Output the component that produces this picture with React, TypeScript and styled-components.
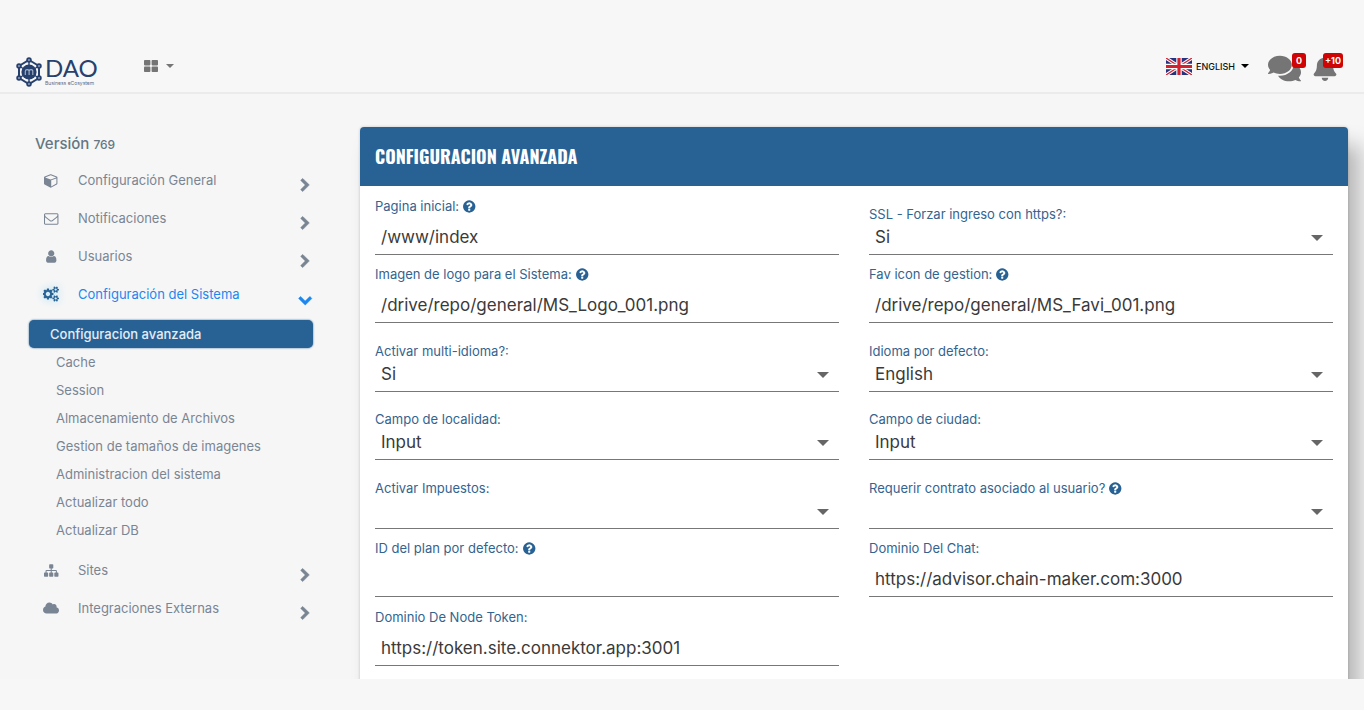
import React from "react";
import styled, { createGlobalStyle, css } from "styled-components";
import { FaBell, FaCloud, FaComments } from "react-icons/fa";

const blue = "#286295";
const textFont = `Inter, "Open Sans", "Liberation Sans", sans-serif`;

const GlobalStyle = createGlobalStyle`
  * { box-sizing: border-box; }
  body { margin: 0; background: #f6f6f6; font-family: ${textFont}; color: #7a8594; }
  button, input, select { font-family: inherit; margin: 0; }
  ul { list-style: none; margin: 0; padding: 0; }
`;

const Page = styled.div`
  display: flex;
  flex-direction: column;
  height: 100vh;
`;

const TopBar = styled.header`
  display: flex;
  align-items: flex-start;
  flex: none;
  height: 94px;
  padding: 52px 21px 0 15px;
  background: #f7f7f7;
  border-bottom: 2px solid #ebebeb;
`;

const Brand = styled.a`
  display: flex;
  align-items: center;
  gap: 2px;
  height: 40px;
  color: #27416f;
  text-decoration: none;
`;

const BrandText = styled.span`
  display: flex;
  flex-direction: column;
  width: 52px;
`;

const BrandName = styled.span`
  font: 400 24px/22px Lato, sans-serif;
`;

const BrandTag = styled.span`
  font: 400 5px/8px Inter, sans-serif;
  white-space: nowrap;
  color: #5d6b87;
`;

const IconButton = styled.button`
  display: flex;
  align-items: center;
  gap: 8px;
  padding: 0;
  border: 0;
  background: none;
  color: #757575;
`;

const AppsButton = styled(IconButton)`
  height: 28px;
  margin-left: 47px;
`;

const Caret = styled.span<{ $color: string; $size: number }>`
  width: 0;
  height: 0;
  border: ${(p) => p.$size}px solid transparent;
  border-top-color: ${(p) => p.$color};
  border-bottom: 0;
`;

const Tools = styled.div`
  display: flex;
  align-items: center;
  height: 32px;
  margin-left: auto;
`;

const LanguageButton = styled(IconButton)`
  gap: 4px;
  margin-right: 19px;
  margin-bottom: 4px;
  font-size: 9px;
  font-weight: 500;
  color: #111;

  & > ${Caret} { margin-left: 2px; }
`;

const AlertButton = styled(IconButton)`
  position: relative;
  height: 28px;
  margin-right: 11px;

  &:last-child { margin-right: 5px; }
`;

const Badge = styled.span`
  position: absolute;
  top: -1px;
  right: -5px;
  min-width: 14px;
  padding: 0 2px;
  border-radius: 3px;
  background: #cf0404;
  color: #fff;
  font-size: 9px;
  font-weight: 700;
  line-height: 15px;
  text-align: center;
`;

const Content = styled.div`
  display: flex;
  align-items: flex-start;
  flex: 1;
  min-height: 0;
  overflow-y: auto;
  overflow-x: hidden;
  scrollbar-width: none;
`;

const Footer = styled.footer`
  flex: none;
  height: 31px;
  background: #f7f7f7;
`;

const Sidebar = styled.nav`
  flex: none;
  width: 360px;
  padding: 40px 47px 0 29px;
`;

const Version = styled.h2`
  margin: 0 0 6px;
  padding-left: 6px;
  font-size: 15px;
  font-weight: 500;
  line-height: 20px;
  color: #647783;

  small { font-size: 12px; }
`;

const MenuLink = styled.a<{ $open?: boolean }>`
  display: grid;
  grid-template-columns: 16px 1fr 15px;
  column-gap: 20px;
  align-items: center;
  height: 38px;
  padding: 0 0 0 14px;
  font-size: 13px;
  color: ${(p) => (p.$open ? "#1d87ee" : "#7a8594")};
  text-decoration: none;
`;

const MenuIcon = styled.span<{ $open?: boolean }>`
  display: flex;
  justify-content: center;
  ${(p) =>
    p.$open &&
    css`
      color: #286295;
      filter: drop-shadow(0 0 4px #a5dcf5);
    `}
`;

const MenuArrow = styled.span`
  display: flex;
  justify-content: center;
  padding-top: 10px;
`;

const SubMenu = styled.ul`
  padding: 7px 0;
`;

const SubLink = styled.a<{ $active?: boolean }>`
  display: block;
  padding-left: 27px;
  font-size: 13px;
  line-height: 28px;
  color: #7a8594;
  text-decoration: none;
  ${(p) =>
    p.$active &&
    css`
      padding-left: 21px;
      border-radius: 5px;
      background: ${blue};
      box-shadow: 0 0 2px ${blue};
      color: #e4edf5;
      font-weight: 500;
    `}
`;

const MenuLabel = styled.span`
  margin-left: -1px;
`;

const Main = styled.main`
  flex: 1;
  min-width: 0;
  padding: 33px 16px 0 0;
`;

const Panel = styled.section`
  border-radius: 4px;
  background: #fff;
  box-shadow: 0 0 3px rgba(0, 0, 0, 0.2), 12px 18px 20px rgba(0, 0, 0, 0.25);
`;

const PanelTitle = styled.h1`
  margin: 0;
  padding: 0 15px;
  border-radius: 4px 4px 0 0;
  background: ${blue};
  color: #fff;
  font: 700 18px/59px Oswald, "Roboto Condensed", "Liberation Sans Narrow", sans-serif;
`;

const Form = styled.form`
  display: grid;
  grid-template-columns: 1fr 1fr;
  grid-auto-rows: 69px 68px;
  column-gap: 30px;
  padding: 0 15px 60px;
`;

const Field = styled.div<{ $select?: boolean }>`
  display: flex;
  flex-direction: column;
  justify-content: flex-end;
  border-bottom: 1px solid #777;

  & > label {
    display: flex;
    align-items: center;
    gap: 3px;
    margin-bottom: ${(p) => (p.$select ? 0 : 8)}px;
    font-size: 13px;
    line-height: 16px;
    color: #33648f;
  }

  svg { color: ${blue}; }
`;

const controlStyle = css`
  width: 100%;
  height: 32px;
  padding: 0 6px 3px;
  border: 0;
  border-radius: 0;
  outline: 0;
  background: transparent;
  color: #3a3a3a;
  font-size: 17px;
`;

const TextInput = styled.input`
  ${controlStyle}
`;

const SelectBox = styled.div`
  display: flex;
  align-items: center;

  & > ${Caret} {
    flex: none;
    margin-left: -22px;
    margin-right: 10px;
    pointer-events: none;
  }
`;

const Select = styled.select`
  ${controlStyle}
  appearance: none;
`;

/* Glyphs drawn on a 1792-unit square */
const glyphs = {
  cube: "M896 1629l640-349v-636l-640 233v752zm-64-865l698-254-698-254-698 254zm832-252v768q0 35-18 65t-49 47l-704 384q-28 16-61 16t-61-16l-704-384q-31-17-49-47t-18-65v-768q0-40 23-73t61-47l704-256q22-8 44-8t44 8l704 256q38 14 61 47t23 73z",
  envelope:
    "M1664 1504v-768q-32 36-69 66-268 206-426 338-51 43-83 67t-86.5 48.5-102.5 24.5h-2q-48 0-102.5-24.5t-86.5-48.5-83-67q-158-132-426-338-37-30-69-66v768q0 13 9.5 22.5t22.5 9.5h1472q13 0 22.5-9.5t9.5-22.5zm0-1051v-24.5l-.5-13-3-12.5-5.5-9-9-7.5-14-2.5h-1472q-13 0-22.5 9.5t-9.5 22.5q0 168 147 284 193 152 401 317 6 5 35 29.5t46 37.5 44.5 31.5 50.5 27.5 43 9h2q20 0 43-9t50.5-27.5 44.5-31.5 46-37.5 35-29.5q208-165 401-317 54-43 100.5-115.5t46.5-131.5zm128-37v1088q0 66-47 113t-113 47h-1472q-66 0-113-47t-47-113v-1088q0-66 47-113t113-47h1472q66 0 113 47t47 113z",
  user: "M1536 1399q0 109-62.5 187t-150.5 78h-854q-88 0-150.5-78t-62.5-187q0-85 8.5-160.5t31.5-152 58.5-131 94-89 134.5-34.5q131 128 313 128t313-128q76 0 134.5 34.5t94 89 58.5 131 31.5 152 8.5 160.5zm-256-887q0 159-112.5 271.5t-271.5 112.5-271.5-112.5-112.5-271.5 112.5-271.5 271.5-112.5 271.5 112.5 112.5 271.5z",
  cogs: "M832 896q0-106-75-181t-181-75-181 75-75 181 75 181 181 75 181-75 75-181zm768 512q0-52-38-90t-90-38-90 38-38 90q0 53 37.5 90.5t90.5 37.5 90.5-37.5 37.5-90.5zm0-1024q0-52-38-90t-90-38-90 38-38 90q0 53 37.5 90.5t90.5 37.5 90.5-37.5 37.5-90.5zm-384 421v185q0 10-7 19.5t-16 10.5l-155 24q-11 35-32 76 34 48 90 115 7 11 7 20 0 12-7 19-23 30-82.5 89.5t-78.5 59.5q-11 0-21-7l-115-90q-37 19-77 31-11 108-23 155-7 24-30 24h-186q-11 0-20-7.5t-10-17.5l-23-153q-34-10-75-31l-118 89q-7 7-20 7-11 0-21-8-144-133-144-160 0-9 7-19 10-14 41-53t47-61q-23-44-35-82l-152-24q-10-1-17-9.5t-7-19.5v-185q0-10 7-19.5t16-10.5l155-24q11-35 32-76-34-48-90-115-7-11-7-20 0-12 7-20 22-30 82-89t79-59q11 0 21 7l115 90q34-18 77-32 11-108 23-154 7-24 30-24h186q11 0 20 7.5t10 17.5l23 153q34 10 75 31l118-89q8-7 20-7 11 0 21 8 144 133 144 160 0 8-7 19-12 16-42 54t-45 60q23 48 34 82l152 23q10 2 17 10.5t7 19.5zm640 533v140q0 16-149 31-12 27-30 52 51 113 51 138 0 4-4 7-122 71-124 71-8 0-46-47t-52-68q-20 2-30 2t-30-2q-14 21-52 68t-46 47q-2 0-124-71-4-3-4-7 0-25 51-138-18-25-30-52-149-15-149-31v-140q0-16 149-31 13-29 30-52-51-113-51-138 0-4 4-7 4-2 35-20t59-34 30-16q8 0 46 46.5t52 67.5q20-2 30-2t30 2q51-71 92-112l6-2q4 0 124 70 4 3 4 7 0 25-51 138 17 23 30 52 149 15 149 31zm0-1024v140q0 16-149 31-12 27-30 52 51 113 51 138 0 4-4 7-122 71-124 71-8 0-46-47t-52-68q-20 2-30 2t-30-2q-14 21-52 68t-46 47q-2 0-124-71-4-3-4-7 0-25 51-138-18-25-30-52-149-15-149-31v-140q0-16 149-31 13-29 30-52-51-113-51-138 0-4 4-7 4-2 35-20t59-34 30-16q8 0 46 46.5t52 67.5q20-2 30-2t30 2q51-71 92-112l6-2q4 0 124 70 4 3 4 7 0 25-51 138 17 23 30 52 149 15 149 31z",
  sitemap:
    "M1792 1248v320q0 40-28 68t-68 28h-320q-40 0-68-28t-28-68v-320q0-40 28-68t68-28h96v-192h-512v192h96q40 0 68 28t28 68v320q0 40-28 68t-68 28h-320q-40 0-68-28t-28-68v-320q0-40 28-68t68-28h96v-192h-512v192h96q40 0 68 28t28 68v320q0 40-28 68t-68 28h-320q-40 0-68-28t-28-68v-320q0-40 28-68t68-28h96v-192q0-52 38-90t90-38h512v-192h-96q-40 0-68-28t-28-68v-320q0-40 28-68t68-28h320q40 0 68 28t28 68v320q0 40-28 68t-68 28h-96v192h512q52 0 90 38t38 90v192h96q40 0 68 28t28 68z",
  chevronRight:
    "M1363 877l-742 742q-19 19-45 19t-45-19l-166-166q-19-19-19-45t19-45l531-531-531-531q-19-19-19-45t19-45l166-166q19-19 45-19t45 19l742 742q19 19 19 45t-19 45z",
  chevronDown:
    "M1683 808l-742 741q-19 19-45 19t-45-19l-742-741q-19-19-19-45.5t19-45.5l166-165q19-19 45-19t45 19l531 531 531-531q19-19 45-19t45 19l166 165q19 19 19 45.5t-19 45.5z",
  help: "M1024 1376v-192q0-14-9-23t-23-9h-192q-14 0-23 9t-9 23v192q0 14 9 23t23 9h192q14 0 23-9t9-23zm256-672q0-88-55.5-163t-138.5-116-170-41q-243 0-371 213-15 24 8 42l132 100q7 6 19 6 16 0 25-12 53-68 86-92 34-24 86-24 48 0 85.5 26t37.5 59q0 38-20 61t-68 45q-63 28-115.5 86.5t-52.5 125.5v36q0 14 9 23t23 9h192q14 0 23-9t9-23q0-19 21.5-49.5t54.5-49.5q32-18 49-28.5t46-35 44.5-48 28-60.5 12.5-81zm384 192q0 209-103 385.5t-279.5 279.5-385.5 103-385.5-103-279.5-279.5-103-385.5 103-385.5 279.5-279.5 385.5-103 385.5 103 279.5 279.5 103 385.5z",
};

function Glyph({ name, size = 15, stroke = 0 }: { name: keyof typeof glyphs; size?: number; stroke?: number }) {
  return (
    <svg
      width={size}
      height={size}
      viewBox="0 0 1860 1792"
      fill="currentColor"
      stroke={stroke ? "currentColor" : "none"}
      strokeWidth={stroke}
      aria-hidden="true"
    >
      <path d={glyphs[name]} />
    </svg>
  );
}

const nodes = [
  [14, 3],
  [24, 9],
  [24, 21],
  [14, 27],
  [4, 21],
  [4, 9],
];

function LogoMark() {
  return (
    <svg width="28" height="30" viewBox="0 0 28 30" fill="none" stroke="#27416f" aria-hidden="true">
      <path d="M14 3L24 9V21L14 27L4 21V9Z" strokeWidth="2" />
      <path d="M14 3V27M4 9L24 21M24 9L4 21" strokeWidth="1.4" />
      {nodes.map(([x, y]) => (
        <circle key={`${x}-${y}`} cx={x} cy={y} r="1.9" fill="#8d9bb5" strokeWidth="1.7" />
      ))}
      <circle cx="14" cy="15" r="7.6" fill="#27416f" stroke="none" />
      <path
        d="M10.3 18V14.2Q10.3 12.6 12.2 12.6T14.1 14.2V18M14.1 14.2Q14.1 12.6 16 12.6T17.8 14.2V18"
        stroke="#a9b6cc"
        strokeWidth="1.1"
      />
    </svg>
  );
}

function Flag() {
  return (
    <svg width="26" height="17" viewBox="0 0 26 17" aria-hidden="true">
      <rect width="26" height="17" fill="#27337f" />
      <path d="M0 0L26 17M26 0L0 17" stroke="#fff" strokeWidth="3.4" />
      <path d="M0 0L26 17M26 0L0 17" stroke="#d3222f" strokeWidth="1.3" />
      <path d="M13 0V17M0 8.5H26" stroke="#fff" strokeWidth="5.4" />
      <path d="M13 0V17M0 8.5H26" stroke="#d3222f" strokeWidth="3.2" />
    </svg>
  );
}

type FieldSpec = { id: string; label: string; value: string; help?: boolean; select?: boolean };

const fields: FieldSpec[] = [
  { id: "home", label: "Pagina inicial:", value: "/www/index", help: true },
  { id: "ssl", label: "SSL - Forzar ingreso con https?:", value: "Si", select: true },
  { id: "logo", label: "Imagen de logo para el Sistema:", value: "/drive/repo/general/MS_Logo_001.png", help: true },
  { id: "favicon", label: "Fav icon de gestion:", value: "/drive/repo/general/MS_Favi_001.png", help: true },
  { id: "multi", label: "Activar multi-idioma?:", value: "Si", select: true },
  { id: "lang", label: "Idioma por defecto:", value: "English", select: true },
  { id: "town", label: "Campo de localidad:", value: "Input", select: true },
  { id: "city", label: "Campo de ciudad:", value: "Input", select: true },
  { id: "tax", label: "Activar Impuestos:", value: "", select: true },
  { id: "contract", label: "Requerir contrato asociado al usuario?", value: "", help: true, select: true },
  { id: "plan", label: "ID del plan por defecto:", value: "", help: true },
  { id: "chat", label: "Dominio Del Chat:", value: "https://advisor.chain-maker.com:3000" },
  { id: "token", label: "Dominio De Node Token:", value: "https://token.site.connektor.app:3001" },
];

const subItems = [
  "Configuracion avanzada",
  "Cache",
  "Session",
  "Almacenamiento de Archivos",
  "Gestion de tamaños de imagenes",
  "Administracion del sistema",
  "Actualizar todo",
  "Actualizar DB",
];

function MenuItem({
  icon,
  label,
  open,
  children,
}: {
  icon: React.ReactNode;
  label: string;
  open?: boolean;
  children?: React.ReactNode;
}) {
  return (
    <li>
      <MenuLink href="#" $open={open}>
        <MenuIcon $open={open}>{icon}</MenuIcon>
        <MenuLabel>{label}</MenuLabel>
        <MenuArrow>
          <Glyph name={open ? "chevronDown" : "chevronRight"} size={15} stroke={60} />
        </MenuArrow>
      </MenuLink>
      {children}
    </li>
  );
}

function FormField({ id, label, value, help, select }: FieldSpec) {
  return (
    <Field $select={select}>
      <label htmlFor={id}>
        {label}
        {help && <Glyph name="help" size={15} />}
      </label>
      {select ? (
        <SelectBox>
          <Select id={id} defaultValue={value}>
            <option>{value}</option>
          </Select>
          <Caret $color="#666" $size={6} />
        </SelectBox>
      ) : (
        <TextInput id={id} type="text" defaultValue={value} />
      )}
    </Field>
  );
}

export default function App() {
  return (
    <Page>
      <GlobalStyle />
      <TopBar>
        <Brand href="#">
          <LogoMark />
          <BrandText>
            <BrandName>DAO</BrandName>
            <BrandTag>Business eCosystem</BrandTag>
          </BrandText>
        </Brand>
        <AppsButton type="button" aria-label="Apps">
          <svg width="14" height="12" viewBox="0 0 14 12" fill="currentColor" aria-hidden="true">
            <rect width="6.4" height="5.4" rx="0.8" />
            <rect x="7.6" width="6.4" height="5.4" rx="0.8" />
            <rect y="6.6" width="6.4" height="5.4" rx="0.8" />
            <rect x="7.6" y="6.6" width="6.4" height="5.4" rx="0.8" />
          </svg>
          <Caret $color="#757575" $size={4} />
        </AppsButton>
        <Tools>
          <LanguageButton type="button">
            <Flag />
            ENGLISH
            <Caret $color="#000" $size={4} />
          </LanguageButton>
          <AlertButton type="button" aria-label="Messages">
            <FaComments size={33} />
            <Badge>0</Badge>
          </AlertButton>
          <AlertButton type="button" aria-label="Notifications">
            <FaBell size={26} />
            <Badge>+10</Badge>
          </AlertButton>
        </Tools>
      </TopBar>
      <Content>
        <Sidebar>
          <Version>
            Versión <small>769</small>
          </Version>
          <ul>
            <MenuItem icon={<Glyph name="cube" />} label="Configuración General" />
            <MenuItem icon={<Glyph name="envelope" />} label="Notificaciones" />
            <MenuItem icon={<Glyph name="user" />} label="Usuarios" />
            <MenuItem icon={<Glyph name="cogs" size={16} />} label="Configuración del Sistema" open>
              <SubMenu>
                {subItems.map((item, i) => (
                  <li key={item}>
                    <SubLink href="#" $active={i === 0}>
                      {item}
                    </SubLink>
                  </li>
                ))}
              </SubMenu>
            </MenuItem>
            <MenuItem icon={<Glyph name="sitemap" />} label="Sites" />
            <MenuItem icon={<FaCloud size={16} />} label="Integraciones Externas" />
          </ul>
        </Sidebar>
        <Main>
          <Panel>
            <PanelTitle>CONFIGURACION AVANZADA</PanelTitle>
            <Form>
              {fields.map((f) => (
                <FormField key={f.id} {...f} />
              ))}
            </Form>
          </Panel>
        </Main>
      </Content>
      <Footer />
    </Page>
  );
}
